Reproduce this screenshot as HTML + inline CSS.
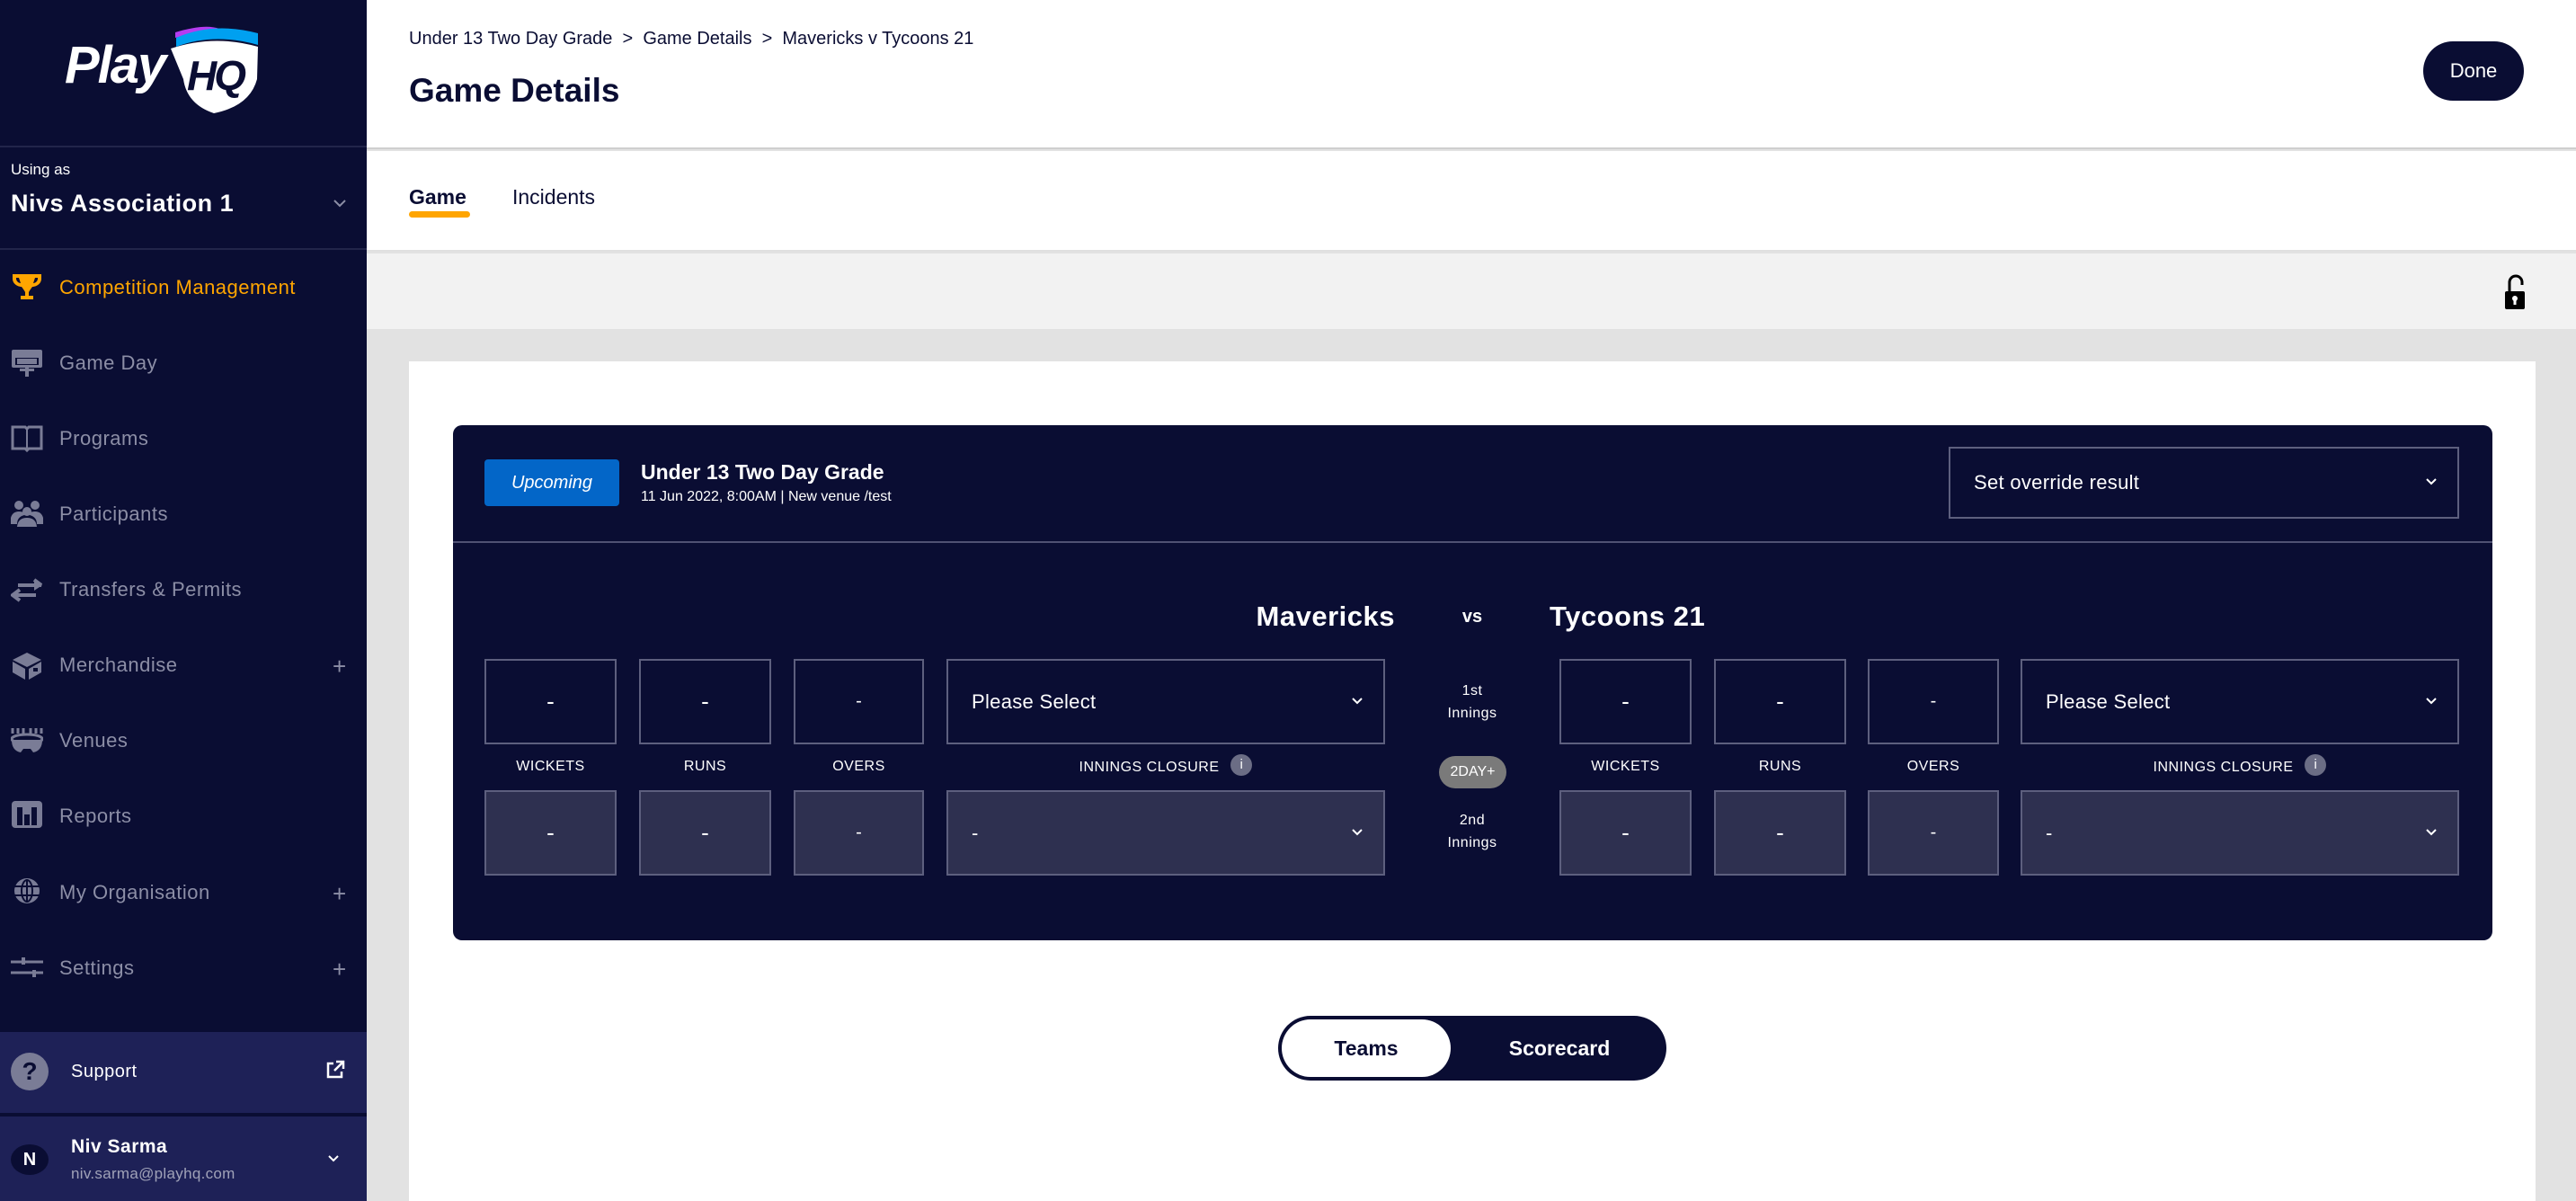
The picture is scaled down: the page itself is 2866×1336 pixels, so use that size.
<!DOCTYPE html>
<html><head><meta charset="utf-8"><style>
*{margin:0;padding:0;box-sizing:border-box}
body{width:2866px;height:1336px;overflow:hidden;position:relative;background:#e2e2e2;font-family:"Liberation Sans",sans-serif;}
.a{position:absolute}
#side{left:0;top:0;width:408px;height:1336px;background:#0a0d33}
.nav{position:absolute;left:66px;font-size:22px;color:#8c8ea6;letter-spacing:0.5px;line-height:1}
.ic{position:absolute;left:12px;width:36px;height:32px}
.plus{position:absolute;left:370px;font-size:26px;color:#8c8ea6;line-height:1}
.box{position:absolute;border:2px solid #5d5f7e;color:#fff;font-size:26px;display:flex;align-items:center;justify-content:center}
.r2{background:#2e3050}
.sel{justify-content:flex-start;padding-left:26px;font-size:22px;letter-spacing:0.3px}
.lbl{position:absolute;color:#fff;font-size:16px;letter-spacing:0.5px;text-align:center;line-height:1}
.chev{position:absolute;right:22px;top:50%;margin-top:-6px}
.mid{position:absolute;color:#fff;font-size:16px;text-align:center;width:120px;left:1578px;line-height:25px;letter-spacing:0.5px}
</style></head><body>
<div id="side" class="a">
  <div class="a" style="left:72px;top:44px;font-size:58px;font-weight:bold;font-style:italic;color:#fff;letter-spacing:-2px;line-height:1">Play</div>
  <svg class="a" style="left:188px;top:28px" width="102" height="100" viewBox="0 0 102 100">
    <path d="M7 8 Q40 -2 56 4 L7 14Z" fill="#b43cf0"/>
    <path d="M8 14 Q50 -4 99 9 L99 22 Q50 8 8 24Z" fill="#00a0f0"/>
    <path d="M2 26 Q50 10 99 24 L98 60 Q90 90 50 98 Q20 88 16 60 Z" fill="#fff"/>
    <text x="20" y="72" font-family="Liberation Sans" font-weight="bold" font-style="italic" font-size="46" fill="#0a0d33" letter-spacing="-3">HQ</text>
  </svg>
  <div class="a" style="left:0;top:162px;width:408px;height:2px;background:#22254a"></div>
  <div class="a" style="left:12px;top:179px;font-size:17px;color:#fff">Using as</div>
  <div class="a" style="left:12px;top:211px;font-size:27px;font-weight:bold;color:#fff;letter-spacing:0.5px">Nivs Association 1</div>
  <svg class="a" style="left:370px;top:221px" width="16" height="10"><path d="M2 2 L8 8 L14 2" stroke="#8c8ea6" stroke-width="2" fill="none"/></svg>
  <div class="a" style="left:0;top:276px;width:408px;height:2px;background:#22254a"></div>

  <svg class="ic" style="top:303px" viewBox="0 0 36 32"><path d="M2 2h32v5c0 6-6 9-10 9q-3 4-4 6v4h5v4H11v-4h5v-4q-1-2-4-6c-4 0-10-3-10-9z M6 6v1c0 3 3 5 5 5l-2-6z M30 6v1c0 3-3 5-5 5l2-6z" fill="#ffa500" fill-rule="evenodd"/></svg>
  <div class="nav" style="top:309px;color:#ffa500">Competition Management</div>

  <svg class="ic" style="top:388px" viewBox="0 0 36 32"><rect x="1" y="1" width="34" height="20" rx="2" fill="#7a7c96"/><rect x="5" y="10" width="26" height="8" fill="#0a0d33"/><rect x="7" y="11" width="22" height="6" fill="#7a7c96"/><rect x="16" y="21" width="4" height="10" fill="#7a7c96"/><rect x="10" y="22" width="16" height="3" fill="#7a7c96"/></svg>
  <div class="nav" style="top:393px">Game Day</div>

  <svg class="ic" style="top:472px" viewBox="0 0 36 32"><path d="M2 3h14l2 2 2-2h14v24H20l-2 2-2-2H2z" fill="none" stroke="#7a7c96" stroke-width="3"/><path d="M18 5v24" stroke="#7a7c96" stroke-width="2"/></svg>
  <div class="nav" style="top:477px">Programs</div>

  <svg class="ic" style="top:556px" viewBox="0 0 36 32"><circle cx="9" cy="6" r="5" fill="#7a7c96"/><circle cx="27" cy="6" r="5" fill="#7a7c96"/><circle cx="18" cy="13" r="5" fill="#7a7c96"/><path d="M0 20q2-7 9-7t6 4q-8 2-8 10H0z M36 20q-2-7-9-7t-6 4q8 2 8 10h7z M7 30q1-10 11-10t11 10z" fill="#7a7c96"/></svg>
  <div class="nav" style="top:561px">Participants</div>

  <svg class="ic" style="top:640px" viewBox="0 0 36 32"><path d="M8 11h26 M26 5l8 6 M2 22h26 M10 16l-8 6 l8 6" stroke="#7a7c96" stroke-width="4" fill="none"/><path d="M26 5l9 6-9 6z" fill="#7a7c96"/></svg>
  <div class="nav" style="top:645px">Transfers &amp; Permits</div>

  <svg class="ic" style="top:724px" viewBox="0 0 36 32"><path d="M2 10l16-8 16 8-16 8z" fill="#7a7c96"/><path d="M2 12l14 8v12L2 24z M20 20l14-8v12l-14 8z" fill="#7a7c96"/><rect x="25" y="19" width="5" height="4" fill="#0a0d33"/></svg>
  <div class="nav" style="top:729px">Merchandise</div>
  <div class="plus" style="top:728px">+</div>

  <svg class="ic" style="top:808px" viewBox="0 0 36 32"><path d="M2 2v6 M8 2v6 M14 2v6 M22 2v6 M28 2v6 M34 2v6" stroke="#7a7c96" stroke-width="3"/><ellipse cx="18" cy="14" rx="17" ry="5" fill="none" stroke="#7a7c96" stroke-width="3"/><path d="M1 15q0 12 10 14l3-4h8l3 4q10-2 10-14" fill="#7a7c96"/></svg>
  <div class="nav" style="top:813px">Venues</div>

  <svg class="ic" style="top:890px" viewBox="0 0 36 32"><rect x="1" y="1" width="34" height="30" rx="4" fill="#7a7c96"/><rect x="7" y="8" width="6" height="20" fill="#0a0d33"/><rect x="15" y="16" width="6" height="12" fill="#0a0d33"/><rect x="23" y="8" width="6" height="20" fill="#0a0d33"/></svg>
  <div class="nav" style="top:897px">Reports</div>

  <svg class="ic" style="top:975px" viewBox="0 0 36 32"><circle cx="18" cy="16" r="14" fill="#7a7c96"/><ellipse cx="18" cy="16" rx="6" ry="12" fill="none" stroke="#0a0d33" stroke-width="2"/><path d="M4 11h28 M4 21h28 M18 3v26" stroke="#0a0d33" stroke-width="2"/></svg>
  <div class="nav" style="top:982px">My Organisation</div>
  <div class="plus" style="top:981px">+</div>

  <svg class="ic" style="top:1060px" viewBox="0 0 36 32"><path d="M0 10h36 M0 22h36" stroke="#7a7c96" stroke-width="3"/><rect x="12" y="5" width="4" height="8" fill="#7a7c96"/><rect x="24" y="19" width="4" height="8" fill="#7a7c96"/></svg>
  <div class="nav" style="top:1066px">Settings</div>
  <div class="plus" style="top:1065px">+</div>

  <div class="a" style="left:0;top:1148px;width:408px;height:90px;background:#1e2157"></div>
  <div class="a" style="left:12px;top:1171px;width:42px;height:42px;border-radius:50%;background:#7a7c96;color:#0a0d33;font-weight:bold;font-size:28px;text-align:center;line-height:42px">?</div>
  <div class="a" style="left:79px;top:1181px;font-size:20px;color:#fff;letter-spacing:0.5px">Support</div>
  <svg class="a" style="left:362px;top:1179px" width="22" height="22" viewBox="0 0 22 22"><path d="M9 4H3v15h15v-6" stroke="#fff" stroke-width="2.5" fill="none"/><path d="M12 2h8v8 M20 2L10 12" stroke="#fff" stroke-width="2.5" fill="none"/></svg>
  <div class="a" style="left:0;top:1240px;width:408px;height:96px;background:#1e2157;border-top:2px solid #0a0d33"></div>
  <div class="a" style="left:12px;top:1273px;width:42px;height:34px;border-radius:50%;background:#0a0d33;color:#fff;font-weight:bold;font-size:20px;text-align:center;line-height:34px">N</div>
  <div class="a" style="left:79px;top:1264px;font-size:21px;font-weight:bold;color:#fff;letter-spacing:0.5px">Niv Sarma</div>
  <div class="a" style="left:79px;top:1296px;font-size:17px;color:#a0a2b8;letter-spacing:0.3px">niv.sarma@playhq.com</div>
  <svg class="a" style="left:364px;top:1284px" width="14" height="9"><path d="M2 2L7 7L12 2" stroke="#fff" stroke-width="2" fill="none"/></svg>
</div>

<!-- header -->
<div class="a" style="left:408px;top:0;width:2458px;height:166px;background:#fff;border-bottom:2px solid #cfcfcf"></div>
<div class="a" style="left:455px;top:32px;font-size:20px;color:#0a0d33">Under 13 Two Day Grade &nbsp;&gt;&nbsp; Game Details &nbsp;&gt;&nbsp; Mavericks v Tycoons 21</div>
<div class="a" style="left:455px;top:80px;font-size:37px;font-weight:bold;color:#0a0d33">Game Details</div>
<div class="a" style="left:2696px;top:46px;width:112px;height:66px;border-radius:33px;background:#0a0d33;color:#fff;font-size:22px;text-align:center;line-height:66px">Done</div>
<div class="a" style="left:408px;top:168px;width:2458px;height:112px;background:#fff;border-bottom:2px solid #e0e0e0"></div>
<div class="a" style="left:455px;top:206px;font-size:23px;font-weight:bold;color:#0a0d33">Game</div>
<div class="a" style="left:455px;top:235px;width:68px;height:7px;border-radius:4px;background:#ffa500"></div>
<div class="a" style="left:570px;top:206px;font-size:23px;color:#0a0d33">Incidents</div>
<div class="a" style="left:408px;top:282px;width:2458px;height:84px;background:#f2f2f2"></div>
<svg class="a" style="left:2786px;top:304px" width="24" height="42" viewBox="0 0 24 42"><path d="M6 20V10a7 7 0 0 1 14 0v3" stroke="#000" stroke-width="3" fill="none"/><rect x="1" y="20" width="22" height="20" rx="2" fill="#000"/><circle cx="12" cy="28" r="3" fill="#fff"/><rect x="10.5" y="28" width="3" height="7" fill="#fff"/></svg>

<!-- card -->
<div class="a" style="left:455px;top:402px;width:2366px;height:934px;background:#fff"></div>
<div class="a" style="left:504px;top:473px;width:2269px;height:573px;background:#0a0d33;border-radius:10px"></div>
<div class="a" style="left:504px;top:602px;width:2269px;height:2px;background:#4f5173"></div>
<div class="a" style="left:539px;top:511px;width:150px;height:52px;background:#0366c8;border-radius:4px;color:#fff;font-style:italic;font-size:20px;text-align:center;line-height:52px">Upcoming</div>
<div class="a" style="left:713px;top:512px;font-size:23px;font-weight:bold;color:#fff">Under 13 Two Day Grade</div>
<div class="a" style="left:713px;top:544px;font-size:16px;color:#fff">11 Jun 2022, 8:00AM | New venue /test</div>
<div class="box sel" style="left:2168px;top:497px;width:568px;height:80px">Set override result
  <svg class="chev" width="14" height="10"><path d="M2 2L7 7L12 2" stroke="#fff" stroke-width="2" fill="none"/></svg></div>

<div class="a" style="left:1300px;top:668px;width:252px;text-align:right;font-size:31px;font-weight:bold;color:#fff;letter-spacing:0.5px">Mavericks</div>
<div class="a" style="left:1610px;top:675px;width:56px;text-align:center;font-size:20px;font-weight:bold;color:#fff">vs</div>
<div class="a" style="left:1724px;top:668px;font-size:31px;font-weight:bold;color:#fff;letter-spacing:0.5px">Tycoons 21</div>

<!-- left row1 -->
<div class="box" style="left:539px;top:733px;width:147px;height:95px">-</div>
<div class="box" style="left:711px;top:733px;width:147px;height:95px">-</div>
<div class="box" style="left:883px;top:733px;width:145px;height:95px;font-size:20px">-</div>
<div class="box sel" style="left:1053px;top:733px;width:488px;height:95px">Please Select<svg class="chev" width="14" height="10"><path d="M2 2L7 7L12 2" stroke="#fff" stroke-width="2" fill="none"/></svg></div>
<div class="lbl" style="left:539px;top:845px;width:147px">WICKETS</div>
<div class="lbl" style="left:711px;top:845px;width:147px">RUNS</div>
<div class="lbl" style="left:883px;top:845px;width:145px">OVERS</div>
<div class="lbl" style="left:1053px;top:845px;width:488px">INNINGS CLOSURE <span style="display:inline-block;width:24px;height:24px;border-radius:50%;background:#6b6d85;vertical-align:middle;margin-left:8px;line-height:24px;font-size:15px;margin-top:-6px">i</span></div>
<div class="box r2" style="left:539px;top:879px;width:147px;height:95px">-</div>
<div class="box r2" style="left:711px;top:879px;width:147px;height:95px">-</div>
<div class="box r2" style="left:883px;top:879px;width:145px;height:95px;font-size:20px">-</div>
<div class="box r2 sel" style="left:1053px;top:879px;width:488px;height:95px">-<svg class="chev" width="14" height="10"><path d="M2 2L7 7L12 2" stroke="#fff" stroke-width="2" fill="none"/></svg></div>

<!-- mid -->
<div class="mid" style="top:756px">1st<br>Innings</div>
<div class="a" style="left:1601px;top:841px;width:75px;height:36px;border-radius:18px;background:#7a7a7a;color:#fff;font-size:16px;text-align:center;line-height:36px">2DAY+</div>
<div class="mid" style="top:900px">2nd<br>Innings</div>

<!-- right -->
<div class="box" style="left:1735px;top:733px;width:147px;height:95px">-</div>
<div class="box" style="left:1907px;top:733px;width:147px;height:95px">-</div>
<div class="box" style="left:2078px;top:733px;width:146px;height:95px;font-size:20px">-</div>
<div class="box sel" style="left:2248px;top:733px;width:488px;height:95px">Please Select<svg class="chev" width="14" height="10"><path d="M2 2L7 7L12 2" stroke="#fff" stroke-width="2" fill="none"/></svg></div>
<div class="lbl" style="left:1735px;top:845px;width:147px">WICKETS</div>
<div class="lbl" style="left:1907px;top:845px;width:147px">RUNS</div>
<div class="lbl" style="left:2078px;top:845px;width:146px">OVERS</div>
<div class="lbl" style="left:2248px;top:845px;width:488px">INNINGS CLOSURE <span style="display:inline-block;width:24px;height:24px;border-radius:50%;background:#6b6d85;vertical-align:middle;margin-left:8px;line-height:24px;font-size:15px;margin-top:-6px">i</span></div>
<div class="box r2" style="left:1735px;top:879px;width:147px;height:95px">-</div>
<div class="box r2" style="left:1907px;top:879px;width:147px;height:95px">-</div>
<div class="box r2" style="left:2078px;top:879px;width:146px;height:95px;font-size:20px">-</div>
<div class="box r2 sel" style="left:2248px;top:879px;width:488px;height:95px">-<svg class="chev" width="14" height="10"><path d="M2 2L7 7L12 2" stroke="#fff" stroke-width="2" fill="none"/></svg></div>

<!-- toggle -->
<div class="a" style="left:1422px;top:1130px;width:432px;height:72px;border-radius:36px;background:#0a0d33"></div>
<div class="a" style="left:1426px;top:1134px;width:188px;height:64px;border-radius:32px;background:#fff;color:#0a0d33;font-weight:bold;font-size:23px;text-align:center;line-height:64px">Teams</div>
<div class="a" style="left:1640px;top:1134px;width:190px;height:64px;color:#fff;font-weight:bold;font-size:23px;text-align:center;line-height:64px">Scorecard</div>
</body></html>
